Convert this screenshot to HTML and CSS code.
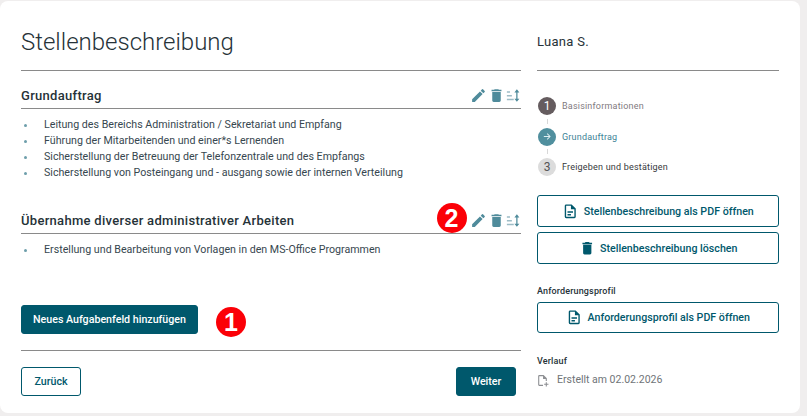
FILE: index.html
```html
<!DOCTYPE html>
<html lang="de">
<head>
<meta charset="utf-8">
<title>Stellenbeschreibung</title>
<link rel="stylesheet" href="styles.css">
</head>
<body>
<main class="card">
  <section class="main">
    <h1 class="title">Stellenbeschreibung</h1>
    <div class="task">
      <div class="task-head">
        <h2>Grundauftrag</h2>
        <div class="tools">
          <svg class="tool" viewBox="0 0 24 24"><path d="M3 17.25V21h3.75L17.81 9.94l-3.75-3.75L3 17.25zM20.71 7.04a1 1 0 0 0 0-1.41l-2.34-2.34a1 1 0 0 0-1.41 0l-1.83 1.83 3.75 3.75 1.83-1.83z"/></svg>
          <svg class="tool" viewBox="0 0 24 24"><path d="M6 19c0 1.1.9 2 2 2h8c1.100 0 2-.9 2-2V7H6v12zM19 4h-3.500l-1-1h-5l-1 1H5v2h14V4z"/></svg>
          <svg class="tool sort" viewBox="0 0 24 24"><path class="light" d="M3 5h5v2.500H3zM3 11h8v2.500H3zM3 17h11v2.500H3z"/><path d="M19 2l4 5h-3v10h3l-4 5-4-5h3V7h-3z"/></svg>
        </div>
      </div>
      <ul class="items">
        <li>Leitung des Bereichs Administration / Sekretariat und Empfang</li>
        <li>Führung der Mitarbeitenden und einer*s Lernenden</li>
        <li>Sicherstellung der Betreuung der Telefonzentrale und des Empfangs</li>
        <li>Sicherstellung von Posteingang und - ausgang sowie der internen Verteilung</li>
      </ul>
    </div>
    <div class="task second">
      <div class="task-head">
        <h2>Übernahme diverser administrativer Arbeiten</h2>
        <div class="tools">
          <span class="marker marker-tool">2</span>
          <svg class="tool" viewBox="0 0 24 24"><path d="M3 17.25V21h3.75L17.81 9.94l-3.75-3.75L3 17.25zM20.71 7.04a1 1 0 0 0 0-1.41l-2.34-2.34a1 1 0 0 0-1.41 0l-1.83 1.83 3.75 3.75 1.83-1.83z"/></svg>
          <svg class="tool" viewBox="0 0 24 24"><path d="M6 19c0 1.1.9 2 2 2h8c1.100 0 2-.9 2-2V7H6v12zM19 4h-3.500l-1-1h-5l-1 1H5v2h14V4z"/></svg>
          <svg class="tool sort" viewBox="0 0 24 24"><path class="light" d="M3 5h5v2.500H3zM3 11h8v2.500H3zM3 17h11v2.500H3z"/><path d="M19 2l4 5h-3v10h3l-4 5-4-5h3V7h-3z"/></svg>
        </div>
      </div>
      <ul class="items">
        <li>Erstellung und Bearbeitung von Vorlagen in den MS-Office Programmen</li>
      </ul>
    </div>
    <div class="add-row">
      <button class="btn btn-solid btn-add">Neues Aufgabenfeld hinzufügen</button>
      <span class="marker marker-add">1</span>
    </div>
    <div class="nav-row">
      <button class="btn btn-outline btn-back">Zurück</button>
      <button class="btn btn-solid btn-next">Weiter</button>
    </div>
  </section>
  <aside class="side">
    <div class="person">Luana S.</div>
    <ol class="steps">
      <li class="step done"><span class="dot">1</span><span>Basisinformationen</span></li>
      <li class="step current"><span class="dot"><svg viewBox="0 0 24 24" width="11" height="11"><path d="M12 5l-1.400 1.400 4.600 4.600H4v2h11.200l-4.600 4.600L12 19l7-7z"/></svg></span><span>Grundauftrag</span></li>
      <li class="step todo"><span class="dot">3</span><span>Freigeben und bestätigen</span></li>
    </ol>
    <div class="actions">
      <button class="btn btn-outline btn-wide"><svg class="btn-icon" viewBox="0 0 24 24"><path d="M14 2H6a2 2 0 0 0-2 2v16a2 2 0 0 0 2 2h12a2 2 0 0 0 2-2V8l-6-6zm4 18H6V4h7v5h5v11zM8 12h8v2H8zm0 4h5v2H8z"/></svg>Stellenbeschreibung als PDF öffnen</button>
      <button class="btn btn-outline btn-wide"><svg class="btn-icon" viewBox="0 0 24 24"><path d="M6 19c0 1.1.9 2 2 2h8c1.100 0 2-.9 2-2V7H6v12zM19 4h-3.500l-1-1h-5l-1 1H5v2h14V4z"/></svg>Stellenbeschreibung löschen</button>
    </div>
    <h3 class="side-label profile">Anforderungsprofil</h3>
    <button class="btn btn-outline btn-wide btn-profile"><svg class="btn-icon" viewBox="0 0 24 24"><path d="M14 2H6a2 2 0 0 0-2 2v16a2 2 0 0 0 2 2h12a2 2 0 0 0 2-2V8l-6-6zm4 18H6V4h7v5h5v11zM8 12h8v2H8zm0 4h5v2H8z"/></svg>Anforderungsprofil als PDF öffnen</button>
    <h3 class="side-label history">Verlauf</h3>
    <div class="log">
      <svg class="log-icon" viewBox="0 0 24 24"><path d="M14 2H6a2 2 0 0 0-2 2v16a2 2 0 0 0 2 2h7v-2H6V4h7v5h5v4h2V8l-6-6zm4 13v3h-3v2h3v3h2v-3h3v-2h-3v-3z"/></svg>
      <span>Erstellt am 02.02.2026</span>
    </div>
  </aside>
</main>
</body>
</html>
```
FILE: styles.css
```css
* { box-sizing: border-box; }
html, body { margin: 0; height: 100%; }
body {
  background: #f0eeee;
  font-family: Roboto, "Liberation Sans", sans-serif;
  color: #263238;
  overflow: hidden;
}
.card {
  width: 800px;
  height: 412px;
  margin-top: 1px;
  background: #fff;
  border-radius: 8px;
  display: flex;
  padding: 0 21px;
  gap: 16px;
}
.main { width: 500px; flex: none; }
.side { width: 242px; flex: none; }
.title {
  margin: 0;
  height: 70px;
  padding-top: 25px;
  border-bottom: 1px solid #8a8a8a;
  font-size: 24px;
  line-height: 32px;
  font-weight: 300;
  color: #263238;
}
.task-head {
  height: 38px;
  border-bottom: 1px solid #8a8a8a;
  display: flex;
  align-items: flex-end;
  justify-content: space-between;
  padding-bottom: 3px;
}
.task-head h2 {
  margin: 0;
  font-size: 13px;
  line-height: 18px;
  font-weight: 500;
  letter-spacing: 0.3px;
  color: #263238;
}
.tools { display: flex; align-items: center; gap: 1.5px; height: 17px; position: relative; margin-bottom: 1px; margin-right: 1px; }
.tool { width: 17px; height: 17px; fill: #4f8b9b; display: block; }
.tool.sort { width: 15px; height: 15px; margin-left: -1.5px; }
.tool .light { fill: #9dbcc6; }
.items {
  margin: 0;
  padding: 8px 0 0 23px;
  list-style: none;
  font-size: 10.67px;
  line-height: 16px;
  color: #37474f;
}
.items li { position: relative; }
.items li::before {
  content: "";
  position: absolute;
  left: -20px;
  top: 7px;
  width: 3px;
  height: 3px;
  background: #6d9eab;
  border-radius: 50%;
}
.second { margin-top: 15px; height: 109px; }
.marker {
  width: 30px;
  height: 30px;
  border-radius: 50%;
  background: #fb0007;
  color: #fff;
  display: flex;
  align-items: center;
  justify-content: center;
  font: 700 25px/1 "Liberation Sans", Arial, sans-serif;
}
.marker-tool { position: absolute; left: -33px; top: -9px; }
.marker-add { margin-top: 2px; }
.btn {
  font-family: Roboto, "Liberation Sans", sans-serif;
  font-size: 10.67px;
  font-weight: 500;
  border-radius: 3px;
  display: flex;
  align-items: center;
  justify-content: center;
  cursor: pointer;
  padding: 0;
}
.btn-solid { background: #00586c; color: #fff; border: 1px solid #00586c; }
.btn-outline { background: #fff; color: #00586c; border: 1px solid #00586c; }
.add-row {
  display: flex;
  align-items: flex-start;
  gap: 18px;
  border-bottom: 1px solid #8a8a8a;
  padding-bottom: 13px;
}
.btn-add { width: 177px; height: 29px; }
.nav-row {
  display: flex;
  justify-content: space-between;
  padding: 16px 5px 0 0;
}
.btn-back { width: 60px; height: 29px; }
.btn-next { width: 60px; height: 29px; }
.person {
  height: 70px;
  border-bottom: 1px solid #8a8a8a;
  padding-top: 32px;
  font-size: 13px;
  line-height: 18px;
  letter-spacing: 0.3px;
  color: #263238;
}
.steps {
  list-style: none;
  margin: 0;
  padding: 26px 0 0 1px;
  display: flex;
  flex-direction: column;
  gap: 12.5px;
  font-size: 9px;
  letter-spacing: 0.2px;
}
.step { display: flex; align-items: center; gap: 6px; height: 18px; position: relative; }
.step + .step::before {
  content: "";
  position: absolute;
  left: 9px;
  top: -9px;
  width: 1px;
  height: 5px;
  background: #d8d8d8;
}
.dot {
  width: 18px;
  height: 18px;
  border-radius: 50%;
  display: flex;
  align-items: center;
  justify-content: center;
  font-size: 12px;
  letter-spacing: 0;
}
.done .dot { background: #655c5f; color: #fff; }
.done { color: #7f7a80; }
.current .dot { background: #508f9e; }
.current .dot svg { fill: #dfeef1; display: block; }
.current { color: #3d8296; }
.todo .dot { background: #dcdcdc; color: #555; }
.todo { color: #37393c; }
.actions { display: flex; flex-direction: column; gap: 5px; margin-top: 19px; }
.btn-wide { width: 242px; height: 32px; gap: 5px; }
.btn-profile { height: 31px; }
.btn-icon { width: 16.500px; height: 16.500px; fill: #00586c; flex: none; }
.side-label {
  margin: 0;
  font-size: 9px;
  line-height: 12px;
  font-weight: 500;
  letter-spacing: 0.15px;
  color: #263238;
}
.profile { margin-top: 21px; margin-bottom: 5px; }
.history { margin-top: 22px; }
.log {
  display: flex;
  align-items: center;
  gap: 8px;
  margin-top: 4px;
  font-size: 10.5px;
  color: #6f7478;
}
.log-icon { width: 13px; height: 13px; fill: #8d8f93; margin: 3px 0 0 -1px; }
```
